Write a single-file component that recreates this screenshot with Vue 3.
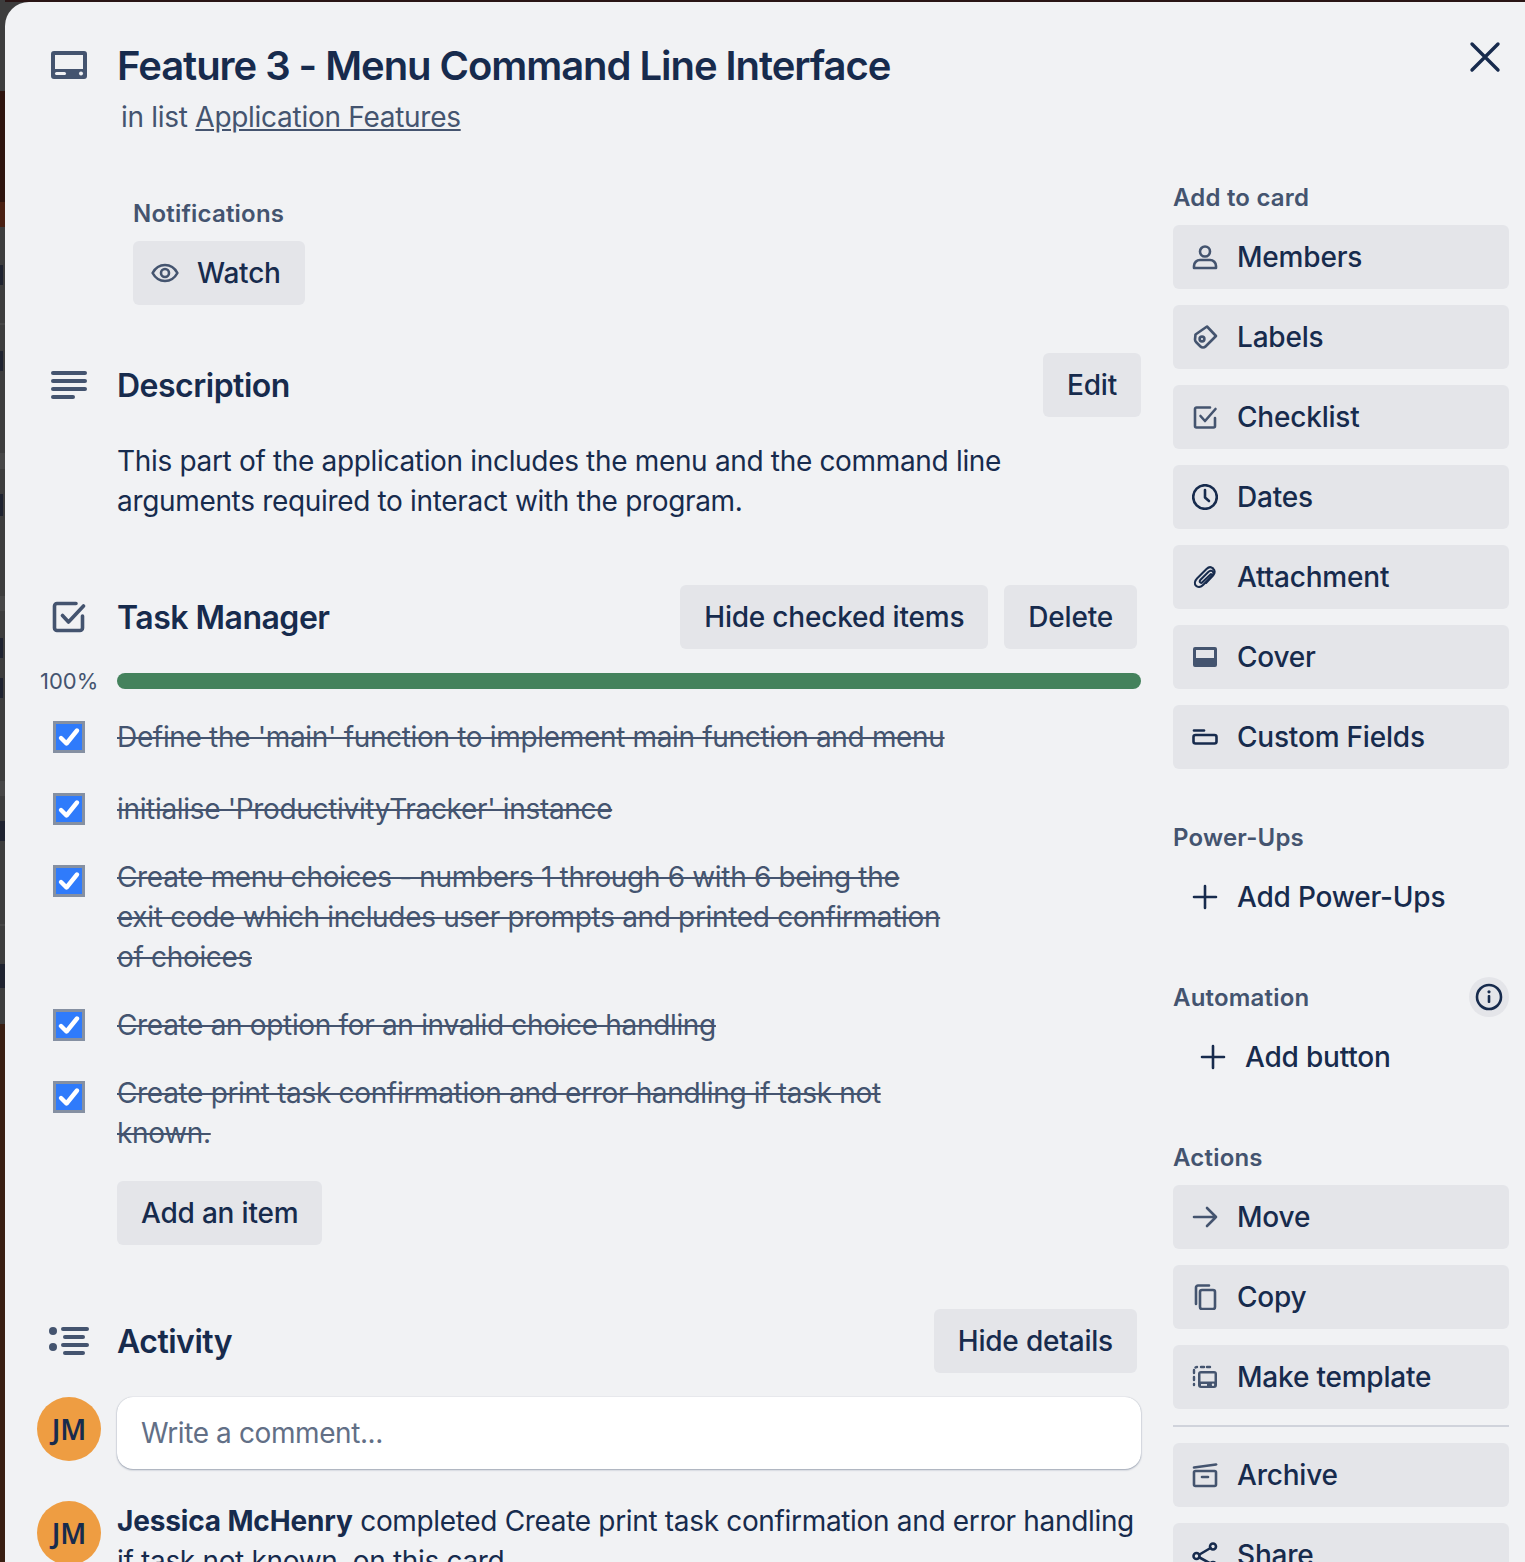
<template>
  <div class="backdrop">
    <div class="strip">
      <div v-for="(s, i) in stripSegments" :key="i" class="seg" :style="{ height: s[0] + 'px', background: s[1], width: s[2] || '100%' }"></div>
    </div>
    <div class="modal">
      <button class="close" aria-label="Close">
        <svg width="32" height="32" viewBox="0 0 32 32"><path d="M3 3l26 26M29 3L3 29" stroke="#172b4d" stroke-width="3.400" stroke-linecap="round" fill="none" /></svg>
      </button>

      <header class="head">
        <div class="gutter head-icon">
          <svg width="36" height="28" viewBox="0 0 36 28"><path fill-rule="evenodd" d="M3 0h30a3 3 0 0 1 3 3v22a3 3 0 0 1-3 3H3a3 3 0 0 1-3-3V3a3 3 0 0 1 3-3zm1 4v14h28V4H4z" fill="#44546f" /><rect x="4" y="21" width="11" height="3" rx="1.500" fill="#f1f2f4" /><circle cx="30" cy="22.500" r="2" fill="#f1f2f4" /></svg>
        </div>
        <div>
          <h1>Feature 3 - Menu Command Line Interface</h1>
          <p class="sub">in list <a>Application Features</a></p>
        </div>
      </header>

      <div class="columns">
        <main class="main">
          <section class="notif">
            <h3>Notifications</h3>
            <button class="btn with-icon watch">
              <span class="ico">
                <svg width="28" height="20" viewBox="0 0 28 20" fill="none" stroke="#44546f" stroke-width="2.600"><path d="M1.600 10C4.500 4.600 9 2 14 2s9.500 2.600 12.400 8C23.500 15.400 19 18 14 18S4.500 15.400 1.600 10z" stroke-linejoin="round" /><circle cx="14" cy="10" r="4" /></svg>
              </span>
              Watch
            </button>
          </section>

          <section class="desc">
            <div class="sec-head desc-head">
              <div class="gutter">
                <svg width="36" height="28" viewBox="0 0 36 28" fill="#44546f"><rect y="0" width="36" height="4" rx="2" /><rect y="8" width="36" height="4" rx="2" /><rect y="16" width="36" height="4" rx="2" /><rect y="24" width="24" height="4" rx="2" /></svg>
              </div>
              <h2>Description</h2>
              <button class="btn edit">Edit</button>
            </div>
            <p class="desc-text">This part of the application includes the menu and the command line arguments required to interact with the program.</p>
          </section>

          <section class="tasks">
            <div class="sec-head task-head">
              <div class="gutter">
                <svg width="34" height="32" viewBox="0 0 34 32" fill="none" stroke="#44546f" stroke-width="3.600" stroke-linecap="round" stroke-linejoin="round"><path d="M30.500 15v12a2.500 2.500 0 0 1-2.500 2.500H5A2.500 2.500 0 0 1 2.500 27V5A2.500 2.500 0 0 1 5 2.500h19" /><path d="M10.500 14.500l6 6.500L31.500 5" /></svg>
              </div>
              <h2>Task Manager</h2>
              <div class="head-btns">
                <button class="btn">Hide checked items</button>
                <button class="btn">Delete</button>
              </div>
            </div>

            <div class="progress">
              <span class="pct">100%</span>
              <div class="bar"></div>
            </div>

            <ul class="items">
              <li v-for="item in items" :key="item.text" :class="['item', { multi: item.multi }]">
                <span class="gutter cb-wrap">
                  <span class="cb">
                    <svg width="26" height="26" viewBox="0 0 26 26"><path d="M5 14l5.500 5.500L21 6.500" fill="none" stroke="#fff" stroke-width="4.400" stroke-linecap="round" stroke-linejoin="round" /></svg>
                  </span>
                </span>
                <span class="item-text">{{ item.text }}</span>
              </li>
            </ul>
            <button class="btn add-item">Add an item</button>
          </section>

          <section class="activity">
            <div class="sec-head act-head">
              <div class="gutter">
                <svg width="40" height="28" viewBox="0 0 40 28" fill="#44546f"><circle cx="4" cy="4" r="4" /><circle cx="4" cy="20" r="4" /><rect x="12" y="0" width="28" height="4" rx="2" /><rect x="14" y="8" width="22" height="4" rx="2" /><rect x="12" y="16" width="28" height="4" rx="2" /><rect x="14" y="24" width="22" height="4" rx="2" /></svg>
              </div>
              <h2>Activity</h2>
              <button class="btn">Hide details</button>
            </div>
            <div class="comment-row">
              <div class="avatar">JM</div>
              <div class="comment-box">Write a comment...</div>
            </div>
            <div class="log-row">
              <div class="avatar">JM</div>
              <p class="log"><strong>Jessica McHenry</strong> completed Create print task confirmation and error handling if task not known. on this card</p>
            </div>
          </section>
        </main>

        <aside class="side">
          <h3 class="side-label">Add to card</h3>
          <div class="stack">
            <button v-for="b in addButtons" :key="b.label" class="btn with-icon side-btn">
              <span class="ico" v-html="b.icon"></span>{{ b.label }}
            </button>
          </div>

          <h3 class="side-label power">Power-Ups</h3>
          <button class="btn with-icon side-btn plain">
            <span class="ico" v-html="plusIcon"></span>Add Power-Ups
          </button>

          <div class="auto-head">
            <h3 class="side-label">Automation</h3>
            <span class="info">
              <svg width="28" height="28" viewBox="0 0 28 28" fill="none"><circle cx="14" cy="14" r="12" stroke="#172b4d" stroke-width="2.600" /><rect x="12.700" y="12" width="2.600" height="8" rx="1" fill="#172b4d" /><circle cx="14" cy="8.800" r="1.600" fill="#172b4d" /></svg>
            </span>
          </div>
          <button class="btn with-icon side-btn plain indent">
            <span class="ico" v-html="plusIcon"></span>Add button
          </button>

          <h3 class="side-label actions">Actions</h3>
          <div class="stack">
            <button v-for="b in actionButtons" :key="b.label" class="btn with-icon side-btn">
              <span class="ico" v-html="b.icon"></span>{{ b.label }}
            </button>
          </div>
          <hr class="rule" />
          <div class="stack">
            <button v-for="b in endButtons" :key="b.label" class="btn with-icon side-btn">
              <span class="ico" v-html="b.icon"></span>{{ b.label }}
            </button>
          </div>
        </aside>
      </div>
    </div>
  </div>
</template>

<script setup>
const gray = '#3d3d3d'
const mark = '#1f2330'
const band = '#474747'

// height, colour, optional width of the bit of page showing left of the modal
const stripSegments = [
  [91, gray], [111, '#2e140e'], [25, '#4a2012'], [38, gray], [20, mark, '3px'], [38, gray], [2, band],
  [26, gray], [20, mark, '3px'], [82, gray], [16, band], [25, gray], [22, mark, '3px'], [80, gray], [15, band],
  [27, gray], [20, mark, '3px'], [20, gray], [20, mark, '3px'], [83, gray], [15, band], [25, gray], [20, mark],
  [83, gray], [2, band], [38, gray], [24, mark], [36, gray], [539, '#3a1f12'],
]

const items = [
  { text: "Define the 'main' function to implement main function and menu" },
  { text: "initialise 'ProductivityTracker' instance" },
  { text: 'Create menu choices - numbers 1 through 6 with 6 being the exit code which includes user prompts and printed confirmation of choices', multi: true },
  { text: 'Create an option for an invalid choice handling' },
  { text: 'Create print task confirmation and error handling if task not known.', multi: true },
]

function svg(body, color = '#44546f') {
  return `<svg width="26" height="26" viewBox="0 0 26 26" fill="none" stroke="${color}" stroke-width="2.600" stroke-linecap="round" stroke-linejoin="round">${body}</svg>`
}

const plusIcon = svg('<path d="M13 2v22M2 13h22"/>', '#172b4d')

const addButtons = [
  { label: 'Members', icon: svg('<circle cx="13" cy="7.500" r="5"/><path d="M2 24v-2a6 6 0 0 1 6-6h10a6 6 0 0 1 6 6v2z"/>') },
  { label: 'Labels', icon: svg('<path d="M15 2.500l9 9.500-10.500 10.500a3.500 3.500 0 0 1-5 0l-4.500-4.500a3.500 3.500 0 0 1-1-2.500l.5-5z"/><circle cx="10" cy="15" r="2.400"/>') },
  { label: 'Checklist', icon: svg('<path d="M23 14v8a1.500 1.500 0 0 1-1.500 1.500h-17A1.500 1.500 0 0 1 3 22V5a1.500 1.500 0 0 1 1.500-1.500H18"/><path d="M8.500 12l4.500 5L23.500 5"/>') },
  { label: 'Dates', icon: svg('<circle cx="13" cy="13" r="11.800"/><path d="M13 6v7.500l4 3.500"/>', '#172b4d') },
  { label: 'Attachment', icon: svg('<path d="M21 4.500c-2-2-4.500-1.500-6.500.5L5 14.500c-2.500 2.500-2.800 5.500-1 7.300s4.800 1.500 7.300-1L20 12c1.800-1.800 1.800-3.500.7-4.600s-2.800-1-4.400.6L8.500 15.800c-1 1-1 2-.4 2.600s1.600.5 2.500-.4L19 10" stroke-width="2"/><path d="M21 4.500c2 2 2 4.500.5 6.500L14 19" stroke-width="2"/>', '#172b4d') },
  { label: 'Cover', icon: '<svg width="26" height="26" viewBox="0 0 26 26"><path fill-rule="evenodd" d="M3 3h20a2 2 0 0 1 2 2v16a2 2 0 0 1-2 2H3a2 2 0 0 1-2-2V5a2 2 0 0 1 2-2zm1 3v8h18V6H4z" fill="#44546f"/></svg>' },
  { label: 'Custom Fields', icon: svg('<path d="M2 6.500h10"/><rect x="1.500" y="11" width="23" height="8.500" rx="2"/>', '#172b4d') },
]

const actionButtons = [
  { label: 'Move', icon: svg('<path d="M2 13h22M15 4l9 9-9 9"/>') },
  { label: 'Copy', icon: svg('<rect x="8" y="6" width="15" height="19" rx="2"/><path d="M4 20V3.500A2 2 0 0 1 6 1.500h11"/>') },
  { label: 'Make template', icon: '<svg width="26" height="26" viewBox="0 0 26 26" fill="none"><path d="M2 9V6a3 3 0 0 1 3-3M2 13v3M2 20v1M9 3h10" stroke="#44546f" stroke-width="2.400" stroke-linecap="round" stroke-dasharray="3 3"/><rect x="6" y="7" width="19" height="17" rx="3" fill="#44546f"/><rect x="8.500" y="9.500" width="14" height="8" fill="#e4e5e9"/><rect x="9" y="20" width="6" height="1.800" fill="#e4e5e9"/><circle cx="21" cy="20.800" r="1.200" fill="#e4e5e9"/></svg>' },
]

const endButtons = [
  { label: 'Archive', icon: svg('<path d="M2 5.500L24 2.500"/><rect x="2" y="9" width="22" height="15" rx="1.500"/><path d="M10 15h6"/>') },
  { label: 'Share', icon: svg('<circle cx="21" cy="4.500" r="3"/><circle cx="4.500" cy="14" r="3"/><circle cx="21" cy="23" r="3"/><path d="M7.500 12.500L18.500 6M7.500 15.500l11 6"/>', '#172b4d') },
]
</script>

<style>
html, body {
  margin: 0;
  height: 100%;
  overflow: hidden;
  background: #2a1515;
}
</style>

<style scoped>
.backdrop {
  display: flex;
  height: 1562px;
  overflow: hidden;
  font-family: Inter, "Liberation Sans", sans-serif;
  color: #172b4d;
  font-size: 28px;
  line-height: 40px;
  letter-spacing: -0.33px;
  background: linear-gradient(#2a1515 2px, #3d3d3d 2px);
}

.strip {
  width: 5px;
  flex: none;
  background: #3d3d3d;
}

.modal {
  position: relative;
  flex: 1;
  margin-top: 2px;
  padding-top: 38px;
  background: #f1f2f4;
  border-top-left-radius: 24px;
  overflow: hidden;
}

.close {
  position: absolute;
  top: 39px;
  right: 24px;
  padding: 0;
  border: 0;
  background: none;
  display: flex;
}

.head {
  display: flex;
}

.gutter {
  width: 112px;
  flex: none;
  display: flex;
  box-sizing: border-box;
  align-items: center;
  padding-left: 46px;
}

.head-icon {
  align-items: flex-start;
  padding-top: 11px;
}

h1 {
  margin: 0;
  font-size: 40px;
  line-height: 52px;
  font-weight: 600;
  letter-spacing: -1.05px;
}

h2 {
  margin: 0;
  padding-top: 2px;
  font-size: 32px;
  line-height: 40px;
  font-weight: 600;
  letter-spacing: -0.5px;
}

h3 {
  margin: 0;
  font-size: 24px;
  line-height: 32px;
  font-weight: 600;
  color: #44546f;
  letter-spacing: 0.2px;
}

.sub {
  margin: 5px 0 0 4px;
  line-height: 40px;
  color: #44546f;
  letter-spacing: -0.28px;
}

.sub a {
  text-decoration: underline;
}

.columns {
  display: flex;
  gap: 32px;
  padding-right: 16px;
}

.main {
  width: 1136px;
  flex: none;
}

.btn {
  display: inline-flex;
  align-items: center;
  height: 64px;
  padding: 0 24px;
  border: 0;
  border-radius: 6px;
  background: #e4e5e9;
  color: #172b4d;
  font: 500 28px/40px Inter, "Liberation Sans", sans-serif;
  letter-spacing: -0.2px;
  white-space: nowrap;
}

.with-icon {
  padding-left: 16px;
}

.ico {
  width: 32px;
  height: 32px;
  margin-right: 16px;
  display: flex;
  align-items: center;
  justify-content: center;
  flex: none;
}

.notif {
  padding: 61px 0 0 128px;
}

.notif h3 {
  margin-bottom: 11px;
}

.desc {
  margin-top: 48px;
}

.sec-head {
  display: flex;
  align-items: center;
  height: 64px;
}

.sec-head h2 {
  flex: 1;
}

.desc-text {
  margin: 24px 0 0 112px;
}

.tasks {
  margin-top: 64px;
}

.head-btns {
  display: flex;
  gap: 16px;
  margin-right: 4px;
}

.task-head .gutter {
  padding-left: 47px;
}

.act-head .gutter {
  padding-left: 44px;
}

.act-head .btn {
  margin-right: 4px;
}

.progress {
  display: flex;
  align-items: center;
  margin-top: 16px;
  height: 32px;
}

.pct {
  width: 112px;
  flex: none;
  padding-left: 35px;
  box-sizing: border-box;
  font-size: 22px;
  letter-spacing: 0;
  color: #44546f;
}

.bar {
  flex: 1;
  height: 16px;
  border-radius: 8px;
  background: #44825c;
}

.items {
  list-style: none;
  margin: 20px 0 0;
  padding: 0;
}

.item {
  display: flex;
  align-items: flex-start;
  margin-top: 28px;
}

.item:first-child {
  margin-top: 0;
}

.item:nth-child(2) {
  margin-top: 32px;
}

.cb-wrap {
  padding: 4px 0 0 48px;
  align-items: flex-start;
}

.multi .cb-wrap {
  padding-top: 8px;
}

.cb {
  width: 32px;
  height: 32px;
  box-sizing: border-box;
  border: 3px solid #8590a2;
  background: #2f7bfb;
  display: flex;
  align-items: center;
  justify-content: center;
}

.item-text {
  width: 830px;
  color: #44546f;
  text-decoration: line-through;
}

.add-item {
  margin: 28px 0 0 112px;
}

.activity {
  margin-top: 64px;
}

.comment-row {
  display: flex;
  margin-top: 24px;
}

.avatar {
  width: 64px;
  height: 64px;
  margin: 0 16px 0 32px;
  flex: none;
  border-radius: 50%;
  background: #ee9d42;
  color: #172b4d;
  display: flex;
  align-items: center;
  justify-content: center;
  font-size: 28px;
  font-weight: 600;
  letter-spacing: 0;
  font-family: "Noto Sans", Inter, sans-serif;
}

.comment-box {
  flex: 1;
  height: 72px;
  box-sizing: border-box;
  padding: 16px 24px;
  background: #fff;
  border-radius: 16px;
  color: #626f86;
  letter-spacing: -0.4px;
  box-shadow: 0 1px 2px rgba(9, 30, 66, 0.35), 0 0 1px rgba(9, 30, 66, 0.25);
}

.log-row {
  display: flex;
  margin-top: 32px;
}

.log {
  margin: 0;
  flex: 1;
}

.log strong {
  font-weight: 700;
  letter-spacing: -0.15px;
}

.side {
  flex: 1;
  padding-top: 45px;
}

.side-label {
  margin-bottom: 11px;
}

.stack {
  display: flex;
  flex-direction: column;
  gap: 16px;
}

.side-btn {
  display: flex;
  width: 100%;
  text-align: left;
}

.plain {
  background: none;
}

.indent {
  padding-left: 24px;
}

.power {
  margin-top: 53px;
}

.auto-head {
  display: flex;
  align-items: center;
  justify-content: space-between;
  margin-top: 48px;
  height: 40px;
  margin-bottom: 8px;
}

.auto-head .side-label {
  margin: 2px 0 0;
}

.info {
  width: 40px;
  height: 40px;
  border-radius: 50%;
  background: #e4e5e9;
  display: flex;
  align-items: center;
  justify-content: center;
}

.actions {
  margin-top: 53px;
}

.rule {
  margin: 16px 0;
  height: 2px;
  border: 0;
  background: #d0d3db;
}
</style>
